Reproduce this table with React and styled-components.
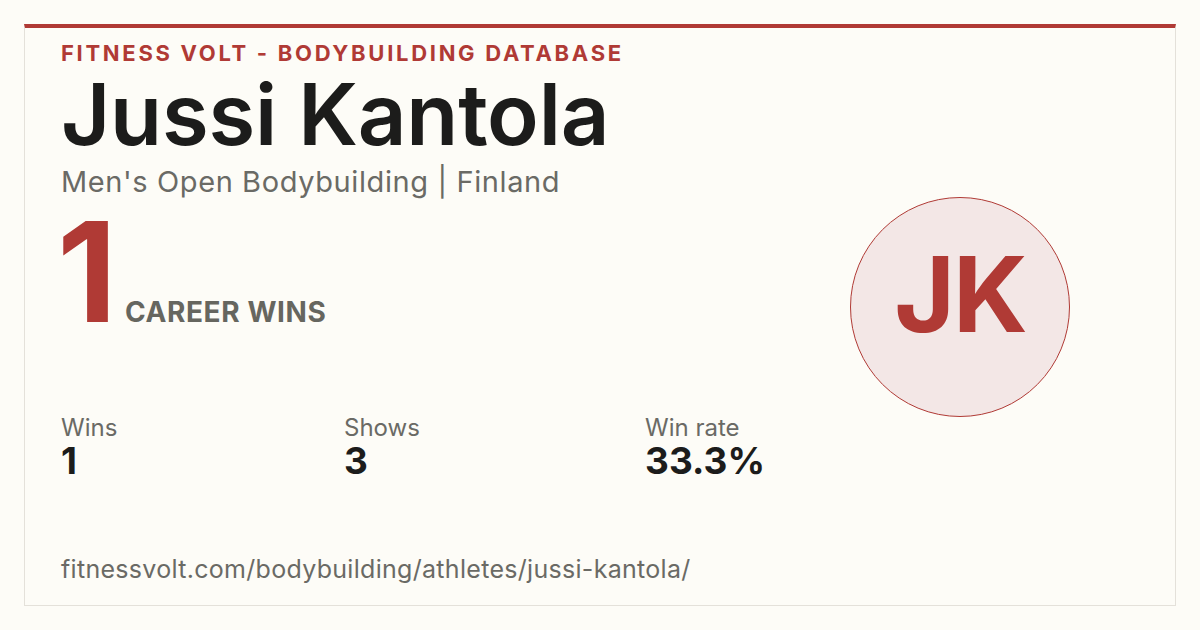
import React from "react";
import styled, { createGlobalStyle } from "styled-components";

const athlete = {
  name: "Jussi Kantola",
  initials: "JK",
  division: "Men's Open Bodybuilding",
  country: "Finland",
  wins: 1,
  shows: 3,
  slug: "jussi-kantola",
};

export default function App() {
  const winRate = ((athlete.wins / athlete.shows) * 100).toFixed(1) + "%";

  return (
    <>
      <GlobalStyle />
      <Page>
        <Card>
          <Main>
            <Info>
              <Brand>FITNESS VOLT - BODYBUILDING DATABASE</Brand>
              <Name>{athlete.name}</Name>
              <Subtitle>
                {athlete.division} | {athlete.country}
              </Subtitle>
              <Headline>
                <BigNumber>{athlete.wins}</BigNumber>
                <BigLabel>CAREER WINS</BigLabel>
              </Headline>
            </Info>
            <Avatar>{athlete.initials}</Avatar>
          </Main>

          <Stats>
            <Stat>
              <StatLabel>Wins</StatLabel>
              <StatValue>{athlete.wins}</StatValue>
            </Stat>
            <Stat>
              <StatLabel>Shows</StatLabel>
              <StatValue>{athlete.shows}</StatValue>
            </Stat>
            <Stat>
              <StatLabel>Win rate</StatLabel>
              <StatValue>{winRate}</StatValue>
            </Stat>
          </Stats>

          <Url>fitnessvolt.com/bodybuilding/athletes/{athlete.slug}/</Url>
        </Card>
      </Page>
    </>
  );
}

const GlobalStyle = createGlobalStyle`
  html, body {
    margin: 0;
    padding: 0;
    background: #fdfcf7;
  }
  body {
    font-family: Inter, "Noto Sans", sans-serif;
  }
`;

const Page = styled.div`
  width: 1200px;
  height: 630px;
  padding: 24px;
  box-sizing: border-box;
  background: #fdfcf7;
`;

const Card = styled.div`
  box-sizing: border-box;
  height: 582px;
  border: 1px solid #e4e1da;
  border-top: 4px solid #b03a35;
  padding: 11px 36px 0 36px;
  display: flex;
  flex-direction: column;
`;

const Main = styled.div`
  display: flex;
  align-items: flex-start;
  height: 375px;
`;

const Info = styled.div`
  display: flex;
  flex-direction: column;
`;

const Brand = styled.div`
  color: #b03a35;
  font-size: 22px;
  font-weight: 700;
  letter-spacing: 2.7px;
  line-height: 28px;
`;

const Name = styled.h1`
  margin: 0;
  color: #1c1c1b;
  font-size: 85px;
  font-weight: 600;
  letter-spacing: -0.2px;
  line-height: 96px;
`;

const Subtitle = styled.div`
  margin-top: 2px;
  color: #6a6a65;
  font-size: 29px;
  letter-spacing: 0.6px;
  line-height: 34px;
`;

const Headline = styled.div`
  display: flex;
  align-items: baseline;
  gap: 8px;
  margin-top: 3px;
`;

const BigNumber = styled.div`
  color: #b03a35;
  font-size: 139px;
  font-weight: 700;
  line-height: 140px;
  margin-left: -4px;
`;

const BigLabel = styled.div`
  color: #66665f;
  font-size: 28px;
  font-weight: 700;
  letter-spacing: 0.6px;
`;

const Avatar = styled.div`
  width: 220px;
  height: 220px;
  box-sizing: border-box;
  margin: 158px 69px 0 auto;
  padding-bottom: 26px;
  border-radius: 50%;
  border: 1.5px solid #b03a35;
  background: #f3e7e6;
  color: #b03a35;
  display: flex;
  align-items: center;
  justify-content: center;
  font-size: 104px;
  font-weight: 700;
  letter-spacing: -2px;
`;

const Stats = styled.div`
  display: grid;
  grid-template-columns: 283px 301px auto;
`;

const Stat = styled.div`
  display: flex;
  flex-direction: column;
`;

const StatLabel = styled.div`
  color: #6a6a65;
  font-size: 24px;
  line-height: 28px;
`;

const StatValue = styled.div`
  color: #1c1c1b;
  font-size: 37px;
  font-weight: 700;
  line-height: 38px;
`;

const Url = styled.div`
  margin-top: auto;
  margin-bottom: 21px;
  color: #6a6a65;
  font-size: 25px;
  letter-spacing: 0.3px;
  line-height: 30px;
`;
